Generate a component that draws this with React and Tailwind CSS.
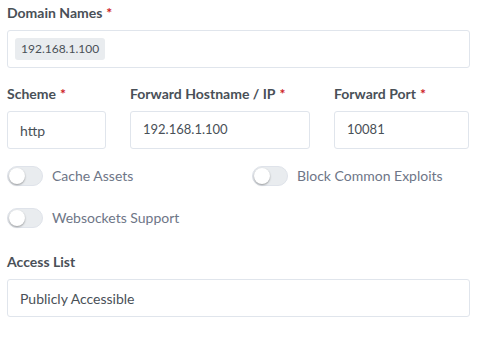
function Label({ children, required }) {
  return (
    <label className="block text-[14px] font-bold text-[#495057] leading-[20px] mb-[7px]">
      {children}
      {required && <span className="text-[#cd201f] ml-[4px]">*</span>}
    </label>
  );
}

function TextBox({ value, size = "text-[14px]" }) {
  return (
    <div className={`h-[38px] border border-[#e0e5ec] rounded-[3px] bg-white px-[12px] flex items-center text-[#495057] ${size}`}>
      {value}
    </div>
  );
}

function Toggle({ label }) {
  return (
    <div className="flex items-center gap-[9px] h-[20px]">
      <span className="relative w-[36px] h-[20px] rounded-full bg-[#e9ecef] border border-[#dfe3ea]">
        <span className="absolute left-[1px] top-[1px] w-[16px] h-[16px] rounded-full bg-white shadow-[0_1px_2px_rgba(0,0,0,0.35)]" />
      </span>
      <span className="text-[14px] leading-[20px] text-[#6e7687]">{label}</span>
    </div>
  );
}

export default function App() {
  return (
    <div className="w-[477px] h-[340px] bg-white px-[7px] pt-[3px] font-['Lato',sans-serif]">
      <Label required>Domain Names</Label>
      <div className="h-[38px] border border-[#e0e5ec] rounded-[3px] bg-white px-[7px] flex items-center">
        <span className="bg-[#e9ecef] rounded-[3px] px-[6px] h-[22px] flex items-center text-[12px] text-[#495057]">
          192.168.1.100
        </span>
      </div>

      <div className="flex gap-[24px] mt-[16px] pr-[1px]">
        <div className="w-[99px]">
          <Label required>Scheme</Label>
          <TextBox value="http" />
        </div>
        <div className="w-[180px]">
          <Label required>Forward Hostname / IP</Label>
          <TextBox value="192.168.1.100" size="text-[13px]" />
        </div>
        <div className="flex-1">
          <Label required>Forward Port</Label>
          <TextBox value="10081" size="text-[13px]" />
        </div>
      </div>

      <div className="grid grid-cols-[245px_1fr] gap-y-[22px] mt-[17px]">
        <Toggle label="Cache Assets" />
        <Toggle label="Block Common Exploits" />
        <Toggle label="Websockets Support" />
      </div>

      <div className="mt-[24px]">
        <Label>Access List</Label>
        <TextBox value="Publicly Accessible" />
      </div>
    </div>
  );
}
